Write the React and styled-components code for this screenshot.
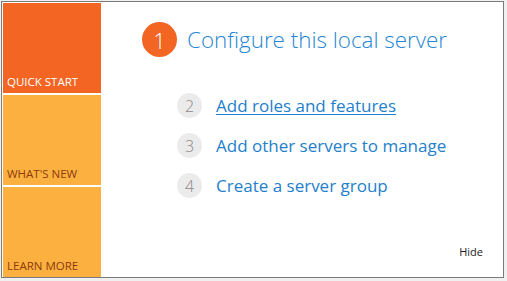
import React from 'react'
import styled, { createGlobalStyle } from 'styled-components';

const GlobalStyle = createGlobalStyle`
  html, body {
    margin: 0;
    padding: 0;
    background: #f0f0f0;
    font-family: "Open Sans", "Noto Sans", "Liberation Sans", sans-serif;
  }
`

const tiles = [
  { label: 'QUICK START', active: true },
  { label: "WHAT'S NEW" },
  { label: 'LEARN MORE' },
]

const steps = [
  { n: 2, text: 'Add roles and features', link: true },
  { n: 3, text: 'Add other servers to manage' },
  { n: 4, text: 'Create a server group' },
]

const App = () => {
  return (
    <>
      <GlobalStyle />
      <Frame>
        <Sidebar>
          {tiles.map((t) => (
            <Tile key={t.label} $active={t.active}>{t.label}</Tile>
          ))}
        </Sidebar>
        <Main>
          <Header>
            <BigNum>1</BigNum>
            <Title>Configure this local server</Title>
          </Header>
          <Steps>
            {steps.map((s) => (
              <Step key={s.n}>
                <SmallNum>{s.n}</SmallNum>
                <StepText $link={s.link}>{s.text}</StepText>
              </Step>
            ))}
          </Steps>
          <Hide>Hide</Hide>
        </Main>
      </Frame>
    </>
  )
}

const Frame = styled.div`
  box-sizing: border-box;
  margin: 1px 0 0 1px;
  width: 503px;
  height: 277px;
  border: 1px solid #7a7a7a;
  background: #fff;
  padding: 1px 0 0 1px;
  display: flex;
`

const Sidebar = styled.div`
  width: 98px;
  display: flex;
  flex-direction: column;
  gap: 2px;
`

const Tile = styled.div`
  flex: 1;
  display: flex;
  align-items: flex-end;
  padding: 0 0 4px 4px;
  font-size: 11.5px;
  background: ${(p) => (p.$active ? '#f26522' : '#fcb040')};
  color: ${(p) => (p.$active ? '#ffffff' : '#8c3b0c')};
`

const Main = styled.div`
  flex: 1;
  display: flex;
  flex-direction: column;
  padding: 19px 20px 18px 41px;
`

const Header = styled.div`
  display: flex;
  align-items: center;
  gap: 10px;
`

const BigNum = styled.div`
  width: 35px;
  height: 35px;
  border-radius: 50%;
  background: #f26522;
  color: #fff;
  display: flex;
  align-items: center;
  justify-content: center;
  font-size: 22px;
  font-weight: 300;
`

const Title = styled.div`
  font-size: 22.4px;
  font-weight: 300;
  color: #2686d4;
`

const Steps = styled.div`
  display: flex;
  flex-direction: column;
  gap: 15px;
  margin: 36px 0 0 35px;
`

const Step = styled.div`
  height: 25px;
  display: flex;
  align-items: center;
  gap: 14px;
`

const SmallNum = styled.div`
  width: 25px;
  height: 25px;
  border-radius: 50%;
  background: #ebebeb;
  color: #8a8a8a;
  display: flex;
  align-items: center;
  justify-content: center;
  font-size: 16px;
  font-weight: 300;
`

const StepText = styled.div`
  font-size: 17px;
  color: #2380cc;
  text-decoration: ${(p) => (p.$link ? 'underline' : 'none')};
  text-underline-offset: 2px;
`

const Hide = styled.div`
  margin-top: auto;
  align-self: flex-end;
  font-size: 11px;
  color: #222;
`

export default App
